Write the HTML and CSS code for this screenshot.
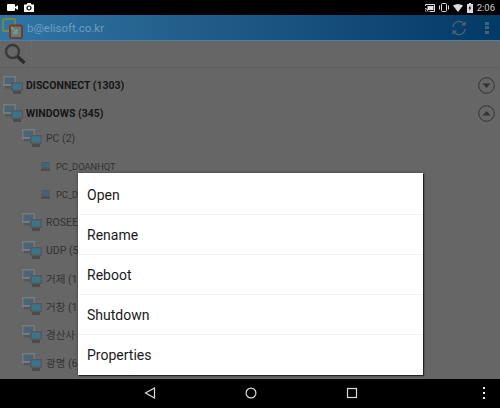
FILE: index.html
```html
<!DOCTYPE html>
<html lang="en">
<head>
  <meta charset="UTF-8">
  <title>Devices</title>
  <link rel="stylesheet" href="styles.css">
</head>
<body>
<svg class="defs" width="0" height="0">
  <symbol id="net" viewBox="0 0 20 18">
    <rect x="0" y="0" width="13" height="10" fill="#767a7c"/>
    <rect x="1.500" y="1.500" width="10" height="6.500" fill="#4a6672"/>
    <rect x="2" y="10" width="9" height="2.500" fill="#565656"/>
    <rect x="8" y="6" width="12" height="9" fill="#53595e"/>
    <rect x="9.500" y="7.500" width="9" height="6" fill="#3a7488"/>
    <rect x="10" y="15" width="8" height="3" fill="#4c4c4c"/>
  </symbol>
  <symbol id="host" viewBox="0 0 10 10">
    <rect x="0.500" y="0" width="9" height="7" fill="#53595e"/>
    <rect x="1.500" y="1" width="7" height="5" fill="#3f6678"/>
    <rect x="0" y="7" width="10" height="3" fill="#4e4e4e"/>
  </symbol>
</svg>

<div class="status">
  <div class="status-left">
    <svg width="11" height="7" viewBox="0 0 11 7"><rect width="8" height="7" rx="1" fill="#fff"/><path d="M8 3l3-2v5l-3-2z" fill="#fff"/></svg>
    <svg width="10" height="9" viewBox="0 0 10 9"><path d="M0 1.500h2.500l1-1.500h3l1 1.500h2.500v7.500h-10z" fill="#fff"/><circle cx="5" cy="5" r="2" fill="none" stroke="#000" stroke-width="1.200"/></svg>
  </div>
  <div class="status-right">
    <svg width="10" height="8" viewBox="0 0 10 8"><path d="M0.500 2v-1.500h9v7h-5" fill="none" stroke="#ddd"/><rect x="2.500" y="2" width="6" height="4" fill="#ddd"/><path d="M0 4.500a3 3 0 0 1 3 3M0 6.500a1 1 0 0 1 1 1" fill="none" stroke="#ddd"/></svg>
    <svg width="10" height="9" viewBox="0 0 10 9"><rect x="2.500" y="0.500" width="5" height="8" rx="1" fill="none" stroke="#ddd"/><path d="M0.500 2.500v4M9.500 2.500v4" stroke="#ddd"/></svg>
    <svg width="10" height="8" viewBox="0 0 10 8"><path d="M0 1.500q5-3 10 0l-5 6.500z" fill="#ddd"/></svg>
    <svg width="6" height="10" viewBox="0 0 6 10"><path d="M2 0h2v1h2v9h-6v-9h2z" fill="#ddd"/><path d="M3.500 2l-2 3.500h1.200l-.4 2.500 2-3.500h-1.200z" fill="#000"/></svg>
    <span class="clock">2:06</span>
  </div>
</div>

<div class="appbar">
  <svg class="logo" width="21" height="21" viewBox="0 0 21 21">
    <rect x="1" y="1" width="12" height="12" rx="1" fill="none" stroke="#74883c" stroke-width="2"/>
    <rect x="8" y="7.500" width="12" height="12.500" rx="1" fill="#5d7c88" stroke="#80381f" stroke-width="2"/>
    <path d="M9 9l6 6M15 11v4h-4" fill="none" stroke="#8c9a62" stroke-width="1.500"/>
  </svg>
  <span class="title">b@elisoft.co.kr</span>
  <svg class="refresh" width="16" height="16" viewBox="0 0 16 16">
    <path d="M2 7a6 6 0 0 1 10.500-3.500M14 9a6 6 0 0 1-10.500 3.500" fill="none" stroke="#4a6478" stroke-width="1.300"/>
    <path d="M14.500 1v4.500h-4.500zM1.500 15v-4.500h4.500z" fill="#4a6478"/>
  </svg>
  <div class="overflow"><i></i><i></i><i></i></div>
</div>

<div class="search">
  <svg width="22" height="22" viewBox="0 0 22 22">
    <circle cx="8.500" cy="8.500" r="6.500" fill="none" stroke="#3a3a3a" stroke-width="2.500"/>
    <path d="M13.500 13.500l7 6.500" stroke="#2c2c2c" stroke-width="3.500"/>
  </svg>
  <div class="search-field"></div>
</div>

<div class="list">
  <div class="row group">
    <svg class="icon-net" width="20" height="18"><use href="#net"/></svg>
    <span>DISCONNECT (1303)</span>
    <svg class="toggle" width="17" height="17" viewBox="0 0 17 17"><circle cx="8.500" cy="8.500" r="7.800" fill="none" stroke="#333"/><path d="M4.500 6.500h8l-4 4.500z" fill="#333"/></svg>
  </div>
  <div class="row group">
    <svg class="icon-net" width="20" height="18"><use href="#net"/></svg>
    <span>WINDOWS (345)</span>
    <svg class="toggle" width="17" height="17" viewBox="0 0 17 17"><circle cx="8.500" cy="8.500" r="7.800" fill="none" stroke="#333"/><path d="M4.500 10.500h8l-4-4.500z" fill="#333"/></svg>
  </div>
  <div class="children">
    <div class="row sub"><svg class="icon-net" width="20" height="18"><use href="#net"/></svg><span>PC (2)</span></div>
    <div class="row host"><svg width="9" height="9"><use href="#host"/></svg><span>PC_DOANHQT</span></div>
    <div class="row host"><svg width="9" height="9"><use href="#host"/></svg><span>PC_D</span></div>
    <div class="row sub"><svg class="icon-net" width="20" height="18"><use href="#net"/></svg><span>ROSEE</span></div>
    <div class="row sub"><svg class="icon-net" width="20" height="18"><use href="#net"/></svg><span>UDP (5</span></div>
    <div class="row sub"><svg class="icon-net" width="20" height="18"><use href="#net"/></svg><span>거제 (1</span></div>
    <div class="row sub"><svg class="icon-net" width="20" height="18"><use href="#net"/></svg><span>거창 (1</span></div>
    <div class="row sub"><svg class="icon-net" width="20" height="18"><use href="#net"/></svg><span>경산사</span></div>
    <div class="row sub"><svg class="icon-net" width="20" height="18"><use href="#net"/></svg><span>광명 (6</span></div>
  </div>
</div>

<div class="nav">
  <svg class="nav-back" width="12" height="12" viewBox="0 0 12 12"><path d="M10.500 1v10l-9-5z" fill="none" stroke="#ddd" stroke-width="1.200"/></svg>
  <svg class="nav-home" width="12" height="12" viewBox="0 0 12 12"><circle cx="6" cy="6" r="4.900" fill="none" stroke="#ddd" stroke-width="1.200"/></svg>
  <svg class="nav-recent" width="12" height="12" viewBox="0 0 12 12"><rect x="1.500" y="1.500" width="9" height="9" fill="none" stroke="#ddd" stroke-width="1.200"/></svg>
  <div class="nav-more"><i></i><i></i><i></i></div>
</div>

<div class="menu">
  <div class="menu-item">Open</div>
  <div class="menu-item">Rename</div>
  <div class="menu-item">Reboot</div>
  <div class="menu-item">Shutdown</div>
  <div class="menu-item">Properties</div>
</div>
</body>
</html>
```

FILE: styles.css
```css
html, body {margin: 0; padding: 0; height: 100%;}
body {width: 500px; height: 408px; overflow: hidden; position: relative; display: flex; flex-direction: column; background-color: #666; font-family: Roboto, "Noto Sans CJK KR", sans-serif;}
.defs {position: absolute;}
svg {display: block; flex: none;}

.status {height: 15px; background-color: #000; display: flex; justify-content: space-between; align-items: center; padding: 0 5px 0 7px;}
.status-left {display: flex; align-items: center; gap: 6px;}
.status-right {display: flex; align-items: center; gap: 4px;}
.clock {color: #ccc; font-size: 9.500px;}

.appbar {height: 26px; display: flex; align-items: center; padding-left: 2px; box-sizing: border-box; background: linear-gradient(90deg, #2f76a6 0%, #245f8c 35%, #033a66 100%); border-bottom: 1px solid #4f7f9c;}
.logo {margin-top: 1px;}
.title {color: #6f9dbf; font-size: 11.500px; margin-left: 4px; flex: 1;}
.refresh {margin-right: 18px;}
.overflow {display: flex; flex-direction: column; gap: 1.500px; margin-right: 11px;}
.overflow i {display: block; width: 4px; height: 3px; background-color: #44647a;}

.search {height: 27px; display: flex; align-items: center; padding-left: 4px; box-sizing: border-box; border-bottom: 1px solid #606060;}
.search-field {width: 1px; height: 26px; margin-left: 5px; background-color: #6b6b6b;}

.list {flex: 1; padding-top: 3px; overflow: hidden;}
.row {height: 28px; display: flex; align-items: center; white-space: nowrap;}
.group {padding: 0 5px 0 3px; font-size: 10.500px; font-weight: 700; color: #161616;}
.group span {flex: 1; margin-left: 3px;}
.children {margin-top: -3px;}
.sub {padding-left: 22px; font-size: 10.500px; color: #333;}
.sub span {margin-left: 4px;}
.host {padding-left: 41px; font-size: 9.300px; color: #333;}
.host span {margin-left: 6px;}

.nav {height: 29px; background-color: #000; position: relative; display: flex; align-items: center; justify-content: space-around;}
.nav-back {position: absolute; left: 144px; top: 8px;}
.nav-home {position: absolute; left: 245px; top: 8px;}
.nav-recent {position: absolute; left: 346px; top: 8px;}
.nav-more {position: absolute; left: 483px; top: 8px; display: flex; flex-direction: column; gap: 3px;}
.nav-more i {display: block; width: 2px; height: 2px; background-color: #eee;}

.menu {position: absolute; left: 78px; top: 173px; width: 345px; height: 202px; padding-top: 2px; box-sizing: border-box; background-color: #fff; box-shadow: 1px 1px 1px rgba(0, 0, 0, .6), 0 0 3px rgba(0, 0, 0, .4); display: flex; flex-direction: column;}
.menu-item {height: 40px; box-sizing: border-box; display: flex; align-items: center; padding-left: 9px; font-size: 14px; color: #1a1a1a; border-bottom: 1px solid #f3f3f3;}
.menu-item:last-child {border-bottom: none;}
```
